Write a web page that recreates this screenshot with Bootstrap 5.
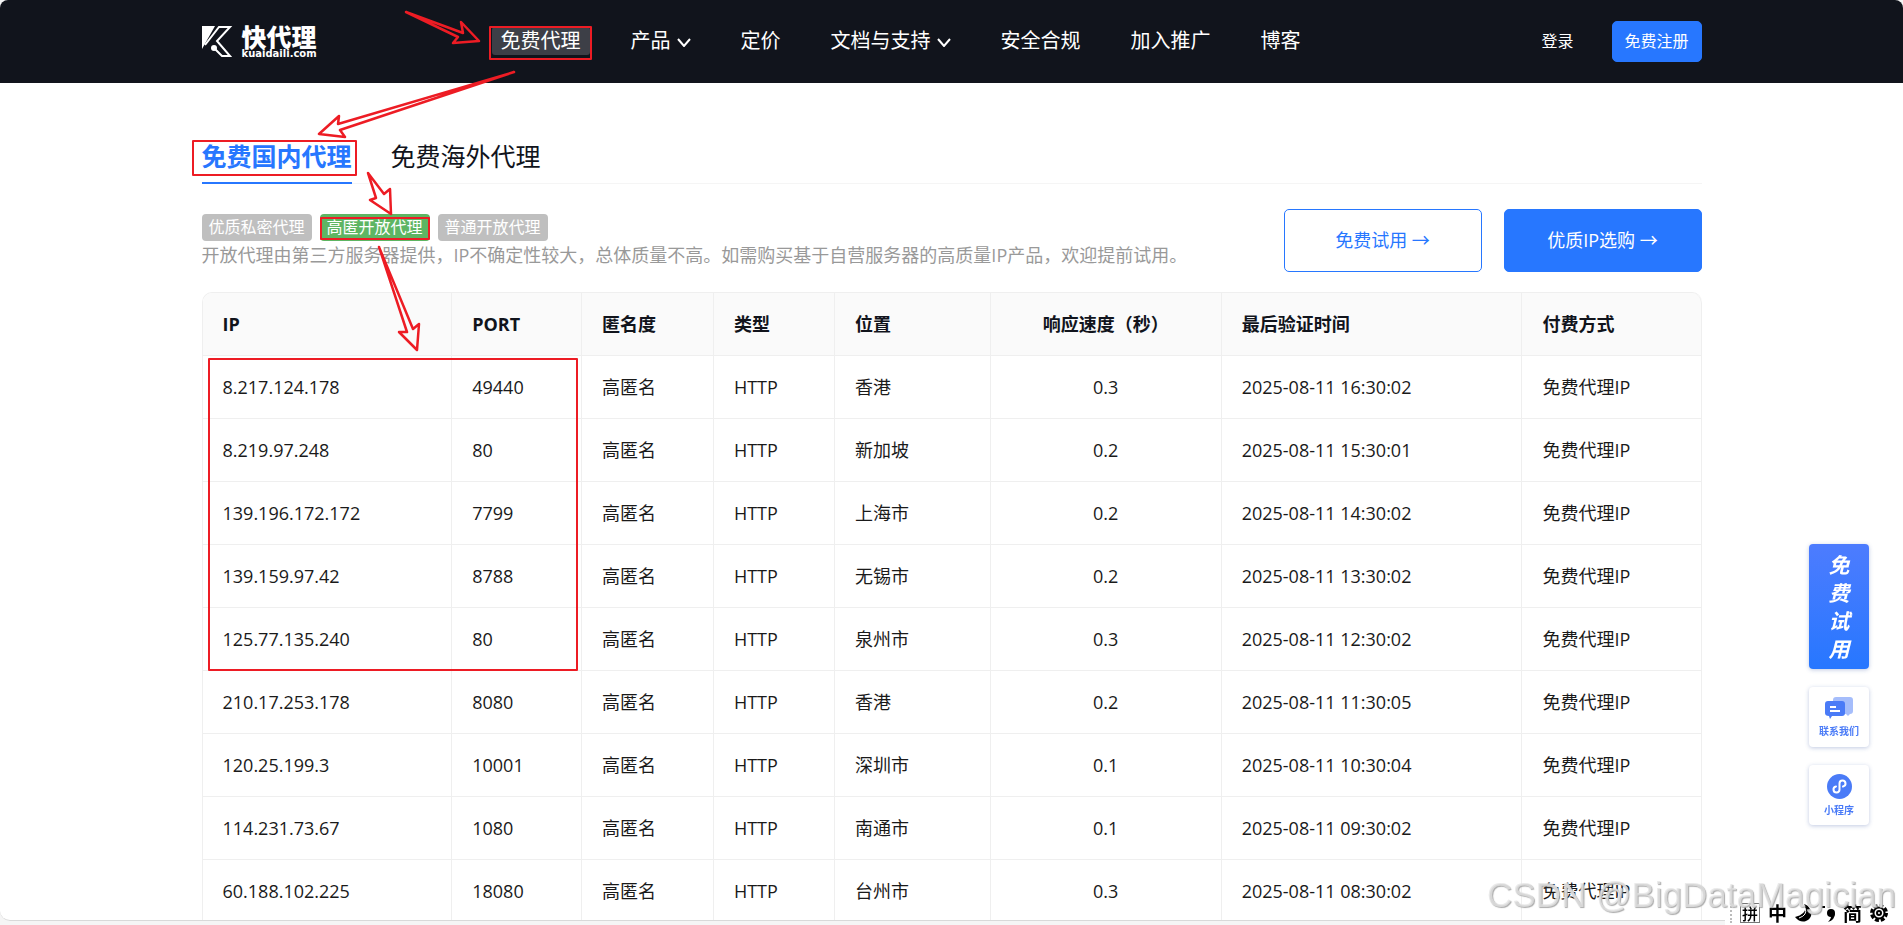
<!DOCTYPE html>
<html lang="zh-CN">
<head>
<meta charset="utf-8">
<meta name="viewport" content="width=device-width, initial-scale=1">
<title>免费代理 - 快代理</title>
<link href="https://cdn.jsdelivr.net/npm/bootstrap@5.3.0/dist/css/bootstrap.min.css" rel="stylesheet">
<style>
  :root { --brand: #2777ff; --ink: #11141c; --line: #efefef; --note: #ed1c24; }
  body { font-family: "Open Sans", "Noto Sans CJK SC", sans-serif; font-size: 18px; color: #1a1a1a; background: #f5f5f5; }
  a { text-decoration: none; }
  .viewport-frame { height: 100vh; padding-bottom: 4px; overflow: hidden; }
  .window { height: 100%; background: #fff; border-bottom: 1px solid #d9d9d9; border-radius: 8px 8px 10px 10px; overflow: hidden; }
  .wrap { max-width: 1500px; margin: 0 auto; position: relative; }
  .top-bar { background: var(--ink); padding-bottom: 1px; }
  .top-bar .wrap { height: 82px; }
  .brand-cn { font: 900 25px/25px "Noto Sans CJK SC", sans-serif; }
  .brand-en { font: bold 10px/10px "DejaVu Sans", sans-serif; }
  .brand-box { width: 299px; gap: 9px; }
  .menu { gap: 50px; font-size: 20px; line-height: 28px; }
  .menu svg { margin-left: 6px; }
  .menu a, .login { color: #fff; }
  .menu .current { background: #3d3f47; margin: 0 -9px; padding: 0 9px; border-radius: 3px; }
  .login { font-size: 16px; margin-right: 38px; }
  .signup { font-size: 16px; width: 90px; height: 41px; padding: 0; }
  .btn { --bs-btn-border-radius: 5px; }
  .btn-brand { background: var(--brand); border-color: var(--brand); color: #fff; }
  .btn-line { background: #fff; border-color: var(--brand); color: var(--brand); }
  .btn-wide { width: 198px; height: 63px; font-size: 18px; }
  .content { padding-top: 54px; }
  .kinds { border-bottom: 1px solid #f5f5f5; gap: 39px; font-size: 25px; line-height: 38px; }
  .kinds a { color: var(--ink); padding-bottom: 7px; border-bottom: 2px solid transparent; margin-bottom: -1px; }
  .kinds .current { color: var(--brand); font-weight: bold; border-color: var(--brand); }
  .intro { margin-top: 25px; }
  .trials { gap: 22px; }
  .tags { gap: 8px; padding-top: 5px; }
  .tag { background: #bfbfbf; color: #fff; width: 110px; font-size: 16px; line-height: 27px; border-radius: 4px; text-align: center; }
  .tag.on { background: #5eb563; }
  .desc { color: #999; line-height: 28px; }
  .proxies { table-layout: fixed; width: 100%; margin-top: 20px; border-collapse: separate; border-spacing: 0; border: 1px solid var(--line); border-right: 0; border-radius: 10px 10px 0 0; overflow: hidden; }
  .proxies th, .proxies td { height: 63px; padding: 0 20px; border-right: 1px solid var(--line); border-bottom: 1px solid var(--line); white-space: nowrap; }
  .proxies th { background: #fafafa; color: var(--ink); }
  .proxies th:last-child { border-top-right-radius: 10px; }
  .proxies .mid { text-align: center; }
  .notes { position: absolute; left: 0; top: 0; width: 100%; height: 700px; overflow: visible; pointer-events: none; z-index: 3; fill: none; stroke: var(--note); stroke-width: 2; }
  .side { position: fixed; right: 34px; top: 544px; width: 60px; gap: 18px; z-index: 4; }
  .side a { height: 60px; background: #fff; border-radius: 4px; box-shadow: 0 1px 4px rgba(50,80,160,.3); color: #4a7bf7; font-size: 10px; line-height: 14px; font-weight: bold; }
  .side .trial { height: 125px; background: linear-gradient(#4d7cfe, #2777ff); color: #fff; font-size: 21px; line-height: 28px; font-style: italic; }
  .watermark { position: fixed; right: 7px; bottom: 10px; z-index: 6; font: 35px/40px "Liberation Sans", sans-serif; color: rgba(230,230,230,.75); text-shadow: 1px 1px 1px #aaa; white-space: nowrap; }
  .ime { position: fixed; right: 0; bottom: 0; width: 178px; height: 24px; z-index: 5; background: #fff; font: bold 19px/24px "Noto Sans CJK SC", sans-serif; color: #000; gap: 8px; padding-left: 5px; }
  .ime > * { flex-shrink: 0; }
  .ime .dots { height: 20px; border-left: 2px dotted #bbb; }
  .ime .pin { border: 1px solid #777; font-size: 16px; line-height: 18px; width: 20px; text-align: center; font-weight: 500; }
</style>
</head>
<body>
<div class="viewport-frame">
<div class="window">
  <header class="top-bar">
    <div class="wrap d-flex align-items-center">
      <a href="#" class="brand-box d-flex align-items-center text-white flex-shrink-0">
        <svg width="31" height="31" viewBox="0 0 31 31" aria-hidden="true">
          <path d="M0 0H13L0 23Z" fill="#fff"/>
          <path d="M3 19L17 1H28L15 15L28 30H20L12 22" fill="none" stroke="#fff" stroke-width="2"/>
          <circle cx="12" cy="22" r="3" fill="#fff"/>
        </svg>
        <span class="d-flex flex-column"><span class="brand-cn">快代理</span><span class="brand-en">kuaidaili.com</span></span>
      </a>
      <nav class="menu d-flex text-nowrap">
        <a class="current" href="#">免费代理</a>
        <a href="#">产品<svg width="14" height="9" viewBox="0 0 14 9" fill="none" stroke="#fff" stroke-width="2"><path d="M1 1L7 8L13 1"/></svg></a>
        <a href="#">定价</a>
        <a href="#">文档与支持<svg width="14" height="9" viewBox="0 0 14 9" fill="none" stroke="#fff" stroke-width="2"><path d="M1 1L7 8L13 1"/></svg></a>
        <a href="#">安全合规</a>
        <a href="#">加入推广</a>
        <a href="#">博客</a>
      </nav>
      <div class="ms-auto d-flex align-items-center">
        <a class="login" href="#">登录</a>
        <button class="btn btn-brand signup" type="button">免费注册</button>
      </div>
    </div>
  </header>

  <main class="content">
    <div class="wrap">
      <nav class="kinds d-flex">
        <a class="current" href="#">免费国内代理</a>
        <a href="#">免费海外代理</a>
      </nav>
      <section class="intro d-flex">
        <div class="me-auto">
          <div class="tags d-flex">
            <a class="tag" href="#">优质私密代理</a><a class="tag on" href="#">高匿开放代理</a><a class="tag" href="#">普通开放代理</a>
          </div>
          <p class="desc m-0">开放代理由第三方服务器提供，IP不确定性较大，总体质量不高。如需购买基于自营服务器的高质量IP产品，欢迎提前试用。</p>
        </div>
        <div class="trials d-flex">
          <button class="btn btn-line btn-wide" type="button">免费试用 →</button>
          <button class="btn btn-brand btn-wide" type="button">优质IP选购 →</button>
        </div>
      </section>

      <table class="proxies">
        <colgroup><col style="width:16.66%"><col style="width:8.66%"><col style="width:8.8%"><col style="width:8.07%"><col style="width:10.4%"><col style="width:15.4%"><col style="width:20.07%"><col></colgroup>
        <thead>
          <tr><th>IP</th><th>PORT</th><th>匿名度</th><th>类型</th><th>位置</th><th class="mid">响应速度（秒）</th><th>最后验证时间</th><th>付费方式</th></tr>
        </thead>
        <tbody>
          <tr><td>8.217.124.178</td><td>49440</td><td>高匿名</td><td>HTTP</td><td>香港</td><td class="mid">0.3</td><td>2025-08-11 16:30:02</td><td>免费代理IP</td></tr>
          <tr><td>8.219.97.248</td><td>80</td><td>高匿名</td><td>HTTP</td><td>新加坡</td><td class="mid">0.2</td><td>2025-08-11 15:30:01</td><td>免费代理IP</td></tr>
          <tr><td>139.196.172.172</td><td>7799</td><td>高匿名</td><td>HTTP</td><td>上海市</td><td class="mid">0.2</td><td>2025-08-11 14:30:02</td><td>免费代理IP</td></tr>
          <tr><td>139.159.97.42</td><td>8788</td><td>高匿名</td><td>HTTP</td><td>无锡市</td><td class="mid">0.2</td><td>2025-08-11 13:30:02</td><td>免费代理IP</td></tr>
          <tr><td>125.77.135.240</td><td>80</td><td>高匿名</td><td>HTTP</td><td>泉州市</td><td class="mid">0.3</td><td>2025-08-11 12:30:02</td><td>免费代理IP</td></tr>
          <tr><td>210.17.253.178</td><td>8080</td><td>高匿名</td><td>HTTP</td><td>香港</td><td class="mid">0.2</td><td>2025-08-11 11:30:05</td><td>免费代理IP</td></tr>
          <tr><td>120.25.199.3</td><td>10001</td><td>高匿名</td><td>HTTP</td><td>深圳市</td><td class="mid">0.1</td><td>2025-08-11 10:30:04</td><td>免费代理IP</td></tr>
          <tr><td>114.231.73.67</td><td>1080</td><td>高匿名</td><td>HTTP</td><td>南通市</td><td class="mid">0.1</td><td>2025-08-11 09:30:02</td><td>免费代理IP</td></tr>
          <tr><td>60.188.102.225</td><td>18080</td><td>高匿名</td><td>HTTP</td><td>台州市</td><td class="mid">0.3</td><td>2025-08-11 08:30:02</td><td>免费代理IP</td></tr>
        </tbody>
      </table>

      <!-- hand-drawn walkthrough marks: boxes and arrows over the page -->
      <svg class="notes" aria-hidden="true">
        <g transform="translate(-202 -137)" stroke-linejoin="round">
          <rect x="490" y="27" width="101" height="32"/>
          <rect x="193" y="141" width="163" height="34"/>
          <rect x="321" y="218" width="108" height="21"/>
          <rect x="209" y="359" width="368" height="311"/>
          <g stroke-width="2.500">
          <path d="M406 12L458 37L453 43L479 41L461 22L463 33Z"/>
          <path d="M514 72L338 124L339 116L319 134L345 137L340 130Z"/>
          <path d="M368 173L376 198L370 200L391 214L390 189L384 194Z"/>
          <path d="M379 247L407 332L399 332L417 350L419 324L413 329Z"/>
          </g>
        </g>
      </svg>
    </div>
  </main>
</div>
</div>

<aside class="side d-flex flex-column">
  <a class="trial d-flex flex-column align-items-center justify-content-center" href="#"><span>免</span><span>费</span><span>试</span><span>用</span></a>
  <a class="d-flex flex-column align-items-center justify-content-center" href="#">
    <svg class="mb-1" width="28" height="23" viewBox="0 0 28 23"><path d="M11 0H25Q28 0 28 3V14Q28 17 25 17L23 19L21 17H8V3Q8 0 11 0Z" fill="#a5bdfb"/><path d="M3 4H17Q20 4 20 7V16Q20 19 17 19H7L5 22L4 19Q0 19 0 16V7Q0 4 3 4Z" fill="#4a7bf7"/><path d="M5 10H11M5 14H15" stroke="#fff" stroke-width="2"/></svg>
    联系我们</a>
  <a class="d-flex flex-column align-items-center justify-content-center" href="#">
    <svg class="mb-1" width="25" height="25" viewBox="0 0 25 25"><circle cx="12.500" cy="12.500" r="12.500" fill="#4a7bf7"/><path d="M9 12.500A3 3 0 1 0 12.500 15.500V9.500A3 3 0 1 1 16 12.500" fill="none" stroke="#fff" stroke-width="2" stroke-linecap="round"/></svg>
    小程序</a>
</aside>

<div class="ime d-flex align-items-center text-nowrap">
  <span class="dots"></span><span class="pin">拼</span><span>中</span>
  <svg width="17" height="18" viewBox="0 0 17 18"><path d="M9 0Q14 9 0 13Q5 19 11 17Q19 13 15 5Q13 1 9 0Z"/><path d="M10 4Q13 11 4 14" stroke="#fff" fill="none"/></svg>
  <svg width="15" height="20" viewBox="0 0 15 20"><path d="M1 4H5" stroke="#000" stroke-width="2"/><circle cx="11" cy="10" r="4"/><path d="M15 10Q15 17 8 19Q12 15 11 11Z"/></svg>
  <span>简</span>
  <svg width="18" height="18" viewBox="0 0 18 18" fill="none" stroke="#000"><circle cx="9" cy="9" r="7.500" stroke-width="3" stroke-dasharray="4 1.900"/><circle cx="9" cy="9" r="5.500" stroke-width="2"/><circle cx="9" cy="9" r="2" stroke-width="2"/></svg>
</div>
<div class="watermark">CSDN @BigDataMagician</div>
<script src="https://cdn.jsdelivr.net/npm/bootstrap@5.3.0/dist/js/bootstrap.bundle.min.js"></script>
</body>
</html>
